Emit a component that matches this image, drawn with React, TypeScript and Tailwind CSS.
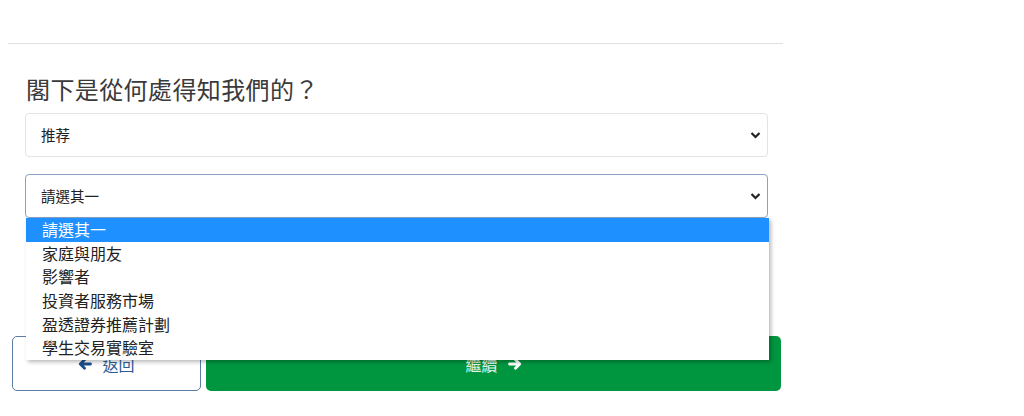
const options = ['請選其一', '家庭與朋友', '影響者', '投資者服務市場', '盈透證券推薦計劃', '學生交易實驗室'];

function Chevron() {
  return (
    <svg width="11" height="8" viewBox="0 0 11 8" className="shrink-0">
      <path d="M1.5 2 L5.5 6 L9.5 2" fill="none" stroke="#222" strokeWidth="2.2" />
    </svg>
  );
}

function Arrow({ dir, color }: { dir: 'left' | 'right'; color: string }) {
  return (
    <svg
      width="14"
      height="12"
      viewBox="0 0 14 12"
      className={`shrink-0 ${dir === 'left' ? '' : 'rotate-180'}`}
    >
      <path
        d="M12.5 6 H2.5 M6.5 1.8 L2.3 6 L6.5 10.2"
        fill="none"
        stroke={color}
        strokeWidth="2.8"
        strokeLinecap="round"
        strokeLinejoin="round"
      />
    </svg>
  );
}

function FakeSelect({ value, focused }: { value: string; focused?: boolean }) {
  return (
    <div
      className={`flex items-center justify-between h-[44px] pl-[15px] pr-[6px] rounded-[4px] bg-white text-[14.5px] text-[#222] border ${
        focused ? 'border-[#8aa3c4]' : 'border-[#e1e4e8]'
      }`}
    >
      <span>{value}</span>
      <Chevron />
    </div>
  );
}

export default function App() {
  return (
    <div
      className="w-[1024px] h-[416px] bg-white overflow-hidden"
      style={{ fontFamily: '"Noto Sans CJK TC", "Noto Sans", sans-serif' }}
    >
      <div className="mt-[43px] ml-[8px] w-[775px] h-px bg-[#e0e0e0]" />

      <div className="ml-[25px] w-[743px]">
        <h2 className="mt-[30px] ml-[1px] text-[24px] leading-[29px] text-[#3a3a3a] tracking-[0.4px]">閣下是從何處得知我們的？</h2>

        <div className="mt-[10px]">
          <FakeSelect value="推荐" />
        </div>

        <div className="mt-[17px] relative">
          <FakeSelect value="請選其一" focused />
          <ul className="absolute z-10 top-full left-[1px] w-[743px] bg-white shadow-[2px_2px_4px_rgba(0,0,0,0.28)] text-[16px] text-[#222]">
            {options.map((o, i) => (
              <li
                key={o}
                className={`h-[23.67px] leading-[23.67px] pl-[16px] ${i === 0 ? 'bg-[#1e90ff] text-white' : ''}`}
              >
                {o}
              </li>
            ))}
          </ul>
        </div>
      </div>

      <div className="mt-[118px] ml-[12px] w-[769px] flex gap-[5px]">
        <button className="w-[189px] h-[55px] rounded-[5px] border border-[#5b7ba6] bg-white flex items-center justify-center gap-[10px] text-[16px] text-[#2c5b98]">
          <Arrow dir="left" color="#1d4e8c" />
          <span>返回</span>
        </button>
        <button className="flex-1 h-[55px] rounded-[5px] bg-[#009640] flex items-center justify-center gap-[10px] text-[16px] text-[#e8f5ec]">
          <span>繼續</span>
          <Arrow dir="right" color="#ffffff" />
        </button>
      </div>
    </div>
  );
}
